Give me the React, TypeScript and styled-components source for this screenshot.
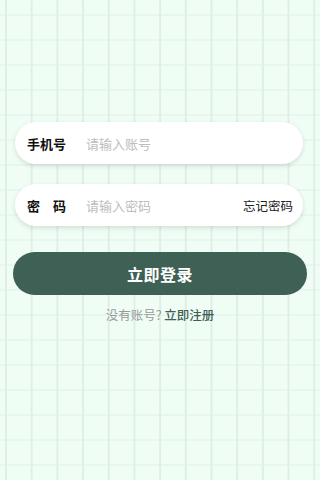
import styled, { createGlobalStyle } from 'styled-components';

const GlobalStyle = createGlobalStyle`
	html, body {
		margin: 0;
		padding: 0;
	}
	body {
		font-family: 'Noto Sans CJK SC', 'Noto Sans', sans-serif;
		background-color: #effdf5;
	}
	* {
		box-sizing: border-box;
	}
`;

const Page = styled.div`
	width: 320px;
	height: 480px;
	overflow: hidden;
	background-color: #effdf5;
	background-image: linear-gradient(to right, #dfefe6 1.5px, transparent 1.5px),
		linear-gradient(to bottom, #dfefe6 1.5px, transparent 1.5px);
	background-size: 25.7px 25px;
	background-position: 5px 14.5px;
	display: flex;
	flex-direction: column;
	padding: 122px 13px 0;
`;

const Field = styled.div`
	display: flex;
	align-items: center;
	height: 42px;
	margin: 0 4px 20px 2px;
	padding: 0 10px 0 12px;
	background: #fff;
	border-radius: 21px;
	box-shadow: 0 2px 5px rgba(0, 0, 0, 0.12);
`;

const Label = styled.span`
	width: 59px;
	flex-shrink: 0;
	font-size: 13px;
	font-weight: 700;
	color: #111;
	white-space: pre;
`;

const Input = styled.input`
	flex: 1;
	min-width: 0;
	border: none;
	outline: none;
	background: transparent;
	padding: 0;
	font-family: inherit;
	font-size: 13px;
	color: #333;
	&::placeholder {
		color: #bdbdbd;
	}
`;

const Forgot = styled.span`
	font-size: 12.5px;
	color: #222;
	flex-shrink: 0;
`;

const Submit = styled.button`
	height: 43px;
	margin-top: 6px;
	border: none;
	border-radius: 22px;
	background: #3f6054;
	color: #fff;
	font-family: inherit;
	font-size: 16px;
	font-weight: 700;
	letter-spacing: 0.5px;
	cursor: pointer;
`;

const Footer = styled.p`
	margin: 10px 0 0;
	text-align: center;
	font-size: 12.5px;
	color: #9a9a9a;
`;

const Link = styled.span`
	color: #3f6054;
	font-weight: 500;
`;

export default function App() {
	return (
		<>
			<GlobalStyle />
			<Page>
				<Field>
					<Label>手机号</Label>
					<Input placeholder='请输入账号' />
				</Field>
				<Field>
					<Label>密　码</Label>
					<Input type='password' placeholder='请输入密码' />
					<Forgot>忘记密码</Forgot>
				</Field>
				<Submit>立即登录</Submit>
				<Footer>
					没有账号? <Link>立即注册</Link>
				</Footer>
			</Page>
		</>
	);
}
